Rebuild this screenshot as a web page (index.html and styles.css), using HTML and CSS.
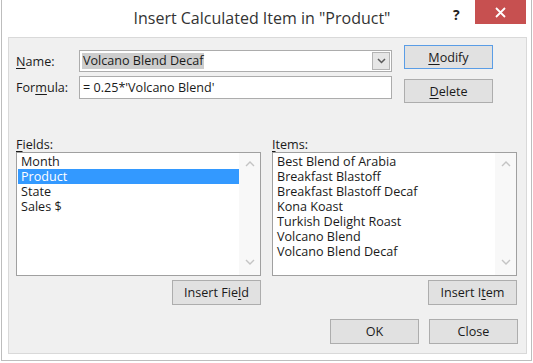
FILE: index.html
```html
<!DOCTYPE html>
<html>
<head>
	<meta charset="utf-8" />
	<link rel="stylesheet" href="styles.css">
</head>
<body>
<div class="window">
	<div class="titlebar">
		<span class="title">Insert Calculated Item in "Product"</span>
		<span class="help">?</span>
		<span class="close">
			<svg width="11" height="11" viewBox="0 0 11 11"><path d="M1 1 L10 10 M10 1 L1 10" stroke="#fff" stroke-width="1.8" fill="none"/></svg>
		</span>
	</div>

	<div class="client">
		<div class="top">
			<div class="form">
				<div class="row">
					<span class="label"><u>N</u>ame:</span>
					<div class="combo">
						<span class="sel">Volcano Blend Decaf</span>
						<span class="drop">
							<svg width="9" height="6" viewBox="0 0 9 6"><path d="M1 1 L4.5 4.5 L8 1" stroke="#5a5a5a" stroke-width="1.5" fill="none"/></svg>
						</span>
					</div>
				</div>
				<div class="row">
					<span class="label">For<u>m</u>ula:</span>
					<div class="textbox">= 0.25*'Volcano Blend'</div>
				</div>
			</div>
			<div class="side">
				<button type="button" class="btn default"><u>M</u>odify</button>
				<button type="button" class="btn"><u>D</u>elete</button>
			</div>
		</div>

		<div class="lists">
			<div class="col">
				<div class="caption"><u>F</u>ields:</div>
				<div class="listbox">
					<ul>
						<li>Month</li>
						<li class="selected">Product</li>
						<li>State</li>
						<li>Sales $</li>
					</ul>
					<div class="scroll">
						<svg width="10" height="6" viewBox="0 0 10 6"><path d="M1 5 L5 1 L9 5" stroke="#c4c4c4" stroke-width="1.4" fill="none"/></svg>
						<svg width="10" height="6" viewBox="0 0 10 6"><path d="M1 1 L5 5 L9 1" stroke="#c4c4c4" stroke-width="1.4" fill="none"/></svg>
					</div>
				</div>
				<div class="under"><button type="button" class="btn">Insert Fie<u>l</u>d</button></div>
			</div>
			<div class="col">
				<div class="caption"><u>I</u>tems:</div>
				<div class="listbox">
					<ul>
						<li>Best Blend of Arabia</li>
						<li>Breakfast Blastoff</li>
						<li>Breakfast Blastoff Decaf</li>
						<li>Kona Koast</li>
						<li>Turkish Delight Roast</li>
						<li>Volcano Blend</li>
						<li>Volcano Blend Decaf</li>
					</ul>
					<div class="scroll">
						<svg width="10" height="6" viewBox="0 0 10 6"><path d="M1 5 L5 1 L9 5" stroke="#c4c4c4" stroke-width="1.4" fill="none"/></svg>
						<svg width="10" height="6" viewBox="0 0 10 6"><path d="M1 1 L5 5 L9 1" stroke="#c4c4c4" stroke-width="1.4" fill="none"/></svg>
					</div>
				</div>
				<div class="under"><button type="button" class="btn">Insert I<u>t</u>em</button></div>
			</div>
		</div>

		<div class="footer">
			<button type="button" class="btn">OK</button>
			<button type="button" class="btn">Close</button>
		</div>
	</div>
</div>
</body>
</html>
```

FILE: styles.css
```css
body {
	margin: 0;
	background: #fff;
	font-family: "Open Sans", "Noto Sans", sans-serif;
	font-size: 12.6px;
	color: #1a1a1a;
}

u {
	text-underline-offset: 2px;
}

.window {
	position: relative;
	width: 531px;
	height: 361px;
	margin-left: 1px;
	box-sizing: border-box;
	border: 1px solid #bdbdbd;
	border-top: none;
	padding: 0 4px 6px 6px;
	background: #fff;
}

.titlebar {
	height: 37px;
	padding-top: 6px;
	padding-right: 11px;
	box-sizing: border-box;
	text-align: center;
	font-size: 16px;
	line-height: 24px;
	color: #333;
}

.help {
	position: absolute;
	left: 451px;
	top: 3px;
	font-size: 14px;
	font-weight: bold;
	color: #222;
}

.close {
	position: absolute;
	right: 5px;
	top: 0;
	width: 51px;
	height: 24px;
	background: #c75050;
	display: flex;
	align-items: center;
	justify-content: center;
}

.client {
	background: #f0f0f0;
	border: 1px solid #d9d9d9;
	padding: 7px 8px 9px 7px;
}

.top {
	display: flex;
	align-items: flex-start;
}

.form {
	width: 376px;
	margin-top: 5px;
	display: flex;
	flex-direction: column;
	gap: 4px;
}

.row {
	display: flex;
	align-items: center;
}

.label {
	width: 63px;
}

.combo {
	width: 313px;
	height: 22px;
	box-sizing: border-box;
	border: 1px solid #acacac;
	background: #fff;
	display: flex;
	align-items: center;
}

.sel {
	margin-left: 2px;
	padding: 0 1px;
	background: #cdcdcd;
	line-height: 16px;
}

.drop {
	margin-left: auto;
	width: 18px;
	height: 18px;
	margin-right: 1px;
	box-sizing: border-box;
	border: 1px solid #b4b4b4;
	background: #e6e6e6;
	display: flex;
	align-items: center;
	justify-content: center;
}

.textbox {
	width: 313px;
	height: 23px;
	box-sizing: border-box;
	border: 1px solid #acacac;
	background: #fff;
	padding-left: 3px;
	line-height: 21px;
}

.side {
	margin-left: 12px;
	display: flex;
	flex-direction: column;
	gap: 10px;
}

.btn {
	width: 89px;
	height: 24px;
	padding: 0;
	background: #e1e1e1;
	border: 1px solid #adadad;
	font-family: inherit;
	font-size: 12.6px;
	color: #1a1a1a;
}

.btn.default {
	border-color: #5a9de6;
}

.lists {
	display: flex;
	gap: 11px;
	margin-top: 34px;
}

.col {
	width: 245px;
}

.caption {
	height: 15px;
	line-height: 15px;
}

.listbox {
	height: 124px;
	box-sizing: border-box;
	border: 1px solid #a0a0a0;
	background: #fff;
	display: flex;
}

.listbox ul {
	flex: 1;
	list-style: none;
	margin: 0 0 0 1px;
	padding: 1px 0 0 0;
}

.listbox li {
	height: 15px;
	line-height: 15px;
	padding-left: 3px;
}

.listbox li.selected {
	background: #3399ff;
	color: #fff;
}

.scroll {
	width: 21px;
	background: #f8f8f8;
	display: flex;
	flex-direction: column;
	justify-content: space-between;
	align-items: center;
	padding: 8px 0 10px;
}

.under {
	display: flex;
	justify-content: flex-end;
	margin-top: 4px;
}

.under .btn,
.footer .btn {
	height: 25px;
}

.footer {
	display: flex;
	justify-content: flex-end;
	gap: 10px;
	margin-top: 14px;
}
```
